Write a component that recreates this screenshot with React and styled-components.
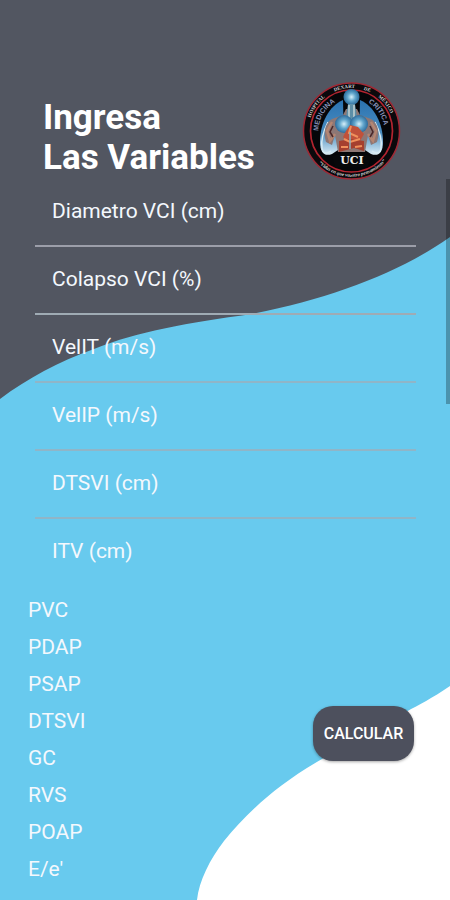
import React, { useId, useState } from "react";
import styled, { createGlobalStyle } from "styled-components";

const GlobalStyle = createGlobalStyle`
  body {
    margin: 0;
    font-family: Roboto, "Liberation Sans", sans-serif;
  }

  *, *::before, *::after {
    box-sizing: border-box;
  }
`;

const Screen = styled.main`
  position: relative;
  min-height: 100vh;
  padding: 82px 0 12px;
  background: #68caee;
  color: #f4f8fd;
  overflow: hidden;
  isolation: isolate;
`;

const Waves = styled.svg`
  position: absolute;
  inset: 0;
  z-index: -1;
  width: 100%;
  height: 100%;
`;

const ScrollThumb = styled.div`
  position: absolute;
  top: 179px;
  right: 0;
  width: 4px;
  height: 225px;
  background: rgba(0, 0, 0, 0.27);
`;

const Header = styled.header`
  display: flex;
  justify-content: space-between;
  align-items: flex-start;
  padding: 0 48px 0 43px;
`;

const Title = styled.h1`
  margin: 16px 0 0;
  font-size: 35px;
  font-weight: 700;
  line-height: 40px;
  color: #ffffff;
`;

const Logo = styled.svg`
  flex: none;
  width: 100px;
  height: 97px;
  overflow: visible;
`;

const Fields = styled.div`
  display: grid;
  padding: 0 34px 0 35px;
`;

const Input = styled.input`
  width: 100%;
  height: 68px;
  padding: 0 17px 2px;
  border: 0;
  border-bottom: 2px solid ${(p) => (p.$last ? "transparent" : p.$line)};
  border-radius: 0;
  background: transparent;
  color: inherit;
  font: inherit;
  font-size: 21px;
  outline: none;

  &::placeholder {
    color: inherit;
    opacity: 1;
  }
`;

const Bottom = styled.div`
  display: flex;
  justify-content: space-between;
  align-items: flex-start;
  padding: 5px 36px 0 28px;
`;

const Results = styled.ul`
  margin: 0;
  padding: 0;
  list-style: none;
  font-size: 21px;
  line-height: 37px;
`;

const Button = styled.button`
  margin-top: 114px;
  width: 101px;
  height: 55px;
  padding: 0;
  border: 0;
  border-radius: 20px;
  background: #4d505d;
  box-shadow: 0 1px 3px rgba(0, 0, 0, 0.35);
  color: #ffffff;
  font: inherit;
  font-size: 16px;
  font-weight: 500;
  cursor: pointer;
`;

const FIELDS = [
  { name: "vci", label: "Diametro VCI (cm)", line: "#9c9ea9" },
  { name: "colapso", label: "Colapso VCI (%)", line: "#9fabb4" },
  { name: "velIT", label: "VelIT (m/s)", line: "#90b5c7" },
  { name: "velIP", label: "VelIP (m/s)", line: "#90b5c7" },
  { name: "dtsvi", label: "DTSVI (cm)", line: "#90b5c7" },
  { name: "itv", label: "ITV (cm)", line: "#90b5c7" },
];

const RESULTS = ["PVC", "PDAP", "PSAP", "DTSVI", "GC", "RVS", "POAP", "E/e'"];

function Background() {
  return (
    <Waves viewBox="0 0 450 900" preserveAspectRatio="none" aria-hidden="true">
      <path
        d="M0 0H450V237C399 273 332 298 252 314C187 323 139 331 94 349C58 362 28 378 0 399Z"
        fill="#525661"
      />
      <path
        d="M450 686C431 699 420 704 406 712L322 759C275 786 247 813 224 841C210 859 199 881 197 900H450Z"
        fill="#ffffff"
      />
    </Waves>
  );
}

function UciLogo() {
  const id = useId();
  return (
    <Logo viewBox="0 2 100 97" role="img" aria-label="Medicina Critica UCI">
      <defs>
        <path id={`${id}top`} d="M6.500 51A43 43 0 0 1 92.500 51" />
        <path id={`${id}inner`} d="M16.500 51A33 33 0 0 1 82.500 51" />
        <path id={`${id}bottom`} d="M13 79A46 46 0 0 0 87 77" />
        <radialGradient id={`${id}glow`}>
          <stop offset="0" stopColor="#d6f0fa" />
          <stop offset="0.5" stopColor="#62a6cc" />
          <stop offset="1" stopColor="#2c6b9c" />
        </radialGradient>
        <linearGradient id={`${id}wing`} x1="0" y1="0" x2="0" y2="1">
          <stop offset="0" stopColor="#2a72b0" />
          <stop offset="0.6" stopColor="#4a8dc0" />
          <stop offset="1" stopColor="#dceef6" />
        </linearGradient>
      </defs>
      <circle cx="49.500" cy="51" r="48" fill="#0b090c" stroke="#a02834" strokeWidth="1.500" />
      <circle cx="49.500" cy="51" r="41" fill="#050609" stroke="#b3242f" strokeWidth="1.700" />

      {/* blue wings behind the body */}
      <path d="M41 20C27 26 18 43 18 62C18 72 22 77 30 74L42 66Z" fill={`url(#${id}wing)`} />
      <path d="M58 20C72 26 81 43 81 62C81 72 77 77 69 74L57 66Z" fill={`url(#${id}wing)`} />
      <path d="M26 42C21 52 19 62 20 68C21 74 25 74 29 71M73 42C78 52 80 62 79 68C78 74 74 74 70 71" fill="none" stroke="#d8ecf4" strokeWidth="1.500" />

      {/* torso and arms */}
      <path d="M44 29H55L58 35L69 39C76 43 78 52 75 62L69 65L66 55L63 72H36L33 55L30 65L24 62C21 52 23 43 30 39L41 35Z" fill="#8d7775" />
      <path d="M30 42L25 51L28 61L33 54M69 42L74 51L71 61L66 54" fill="none" stroke="#b58672" strokeWidth="2.500" />
      <path d="M31 46L28 52L31 57M68 46L71 52L68 57" fill="none" stroke="#4b2829" strokeWidth="1.500" />
      <ellipse cx="49.500" cy="17" rx="8" ry="8" fill={`url(#${id}glow)`} />
      <path d="M46 24H53L55 37L50 41L44 37Z" fill="#5d8fa7" />
      <path d="M47 25V38M52 25V38M38 38L49 41L61 38" stroke="#dde5df" strokeWidth="1.200" fill="none" />
      <circle cx="42" cy="44" r="9" fill={`url(#${id}glow)`} />
      <circle cx="57" cy="44" r="9" fill={`url(#${id}glow)`} />

      {/* heart and organs */}
      <path d="M48 45L56 47L62 54L58 61L46 62L41 57L44 51Z" fill="#c0513a" />
      <path d="M37 61L49 59L62 61V71L52 68L37 72Z" fill="#a5402f" />
      <path d="M49 46L47 53L56 57M42 59L48 62L58 59M39 67H46M53 67L60 66" stroke="#f0915c" strokeWidth="2" fill="none" />
      <path d="M48 52V69" stroke="#8eb2bc" strokeWidth="1.500" />
      <path d="M30 76Q49 69 69 76L66 87H33Z" fill="#07080a" />

      <text x="50" y="84" textAnchor="middle" fill="#eeeeee" fontFamily="DejaVu Serif, serif" fontSize="11" fontWeight="700">UCI</text>
      <text fill="#ced0d4" fontFamily="Liberation Serif, serif" fontSize="5" fontWeight="700">
        <textPath href={`#${id}top`} startOffset="10%">HOSPITAL</textPath>
        <textPath href={`#${id}top`} startOffset="37%">DEXART</textPath>
        <textPath href={`#${id}top`} startOffset="59%">DE</textPath>
        <textPath href={`#${id}top`} startOffset="71%">MÉXICO</textPath>
      </text>
      <text fill="#8994ba" fontFamily="Liberation Sans, sans-serif" fontSize="7" fontWeight="700">
        <textPath href={`#${id}inner`} startOffset="0%">MEDICINA</textPath>
        <textPath href={`#${id}inner`} startOffset="67%">CRÍTICA</textPath>
      </text>
      <text fill="#d6d6d6" fontFamily="Liberation Serif, serif" fontSize="5" fontStyle="italic" fontWeight="700" textAnchor="middle">
        <textPath href={`#${id}bottom`} startOffset="50%">“Vidas en que vuestro pensamiento”</textPath>
      </text>
    </Logo>
  );
}

function App() {
  const [values, setValues] = useState({});

  const handleChange = (e) => {
    setValues({ ...values, [e.target.name]: e.target.value });
  };

  return (
    <>
      <GlobalStyle />
      <Screen>
        <Background />
        <Header>
          <Title>
            Ingresa
            <br />
            Las Variables
          </Title>
          <UciLogo />
        </Header>

        <form onSubmit={(e) => e.preventDefault()}>
          <Fields>
            {FIELDS.map((field, i) => (
              <Input
                key={field.name}
                name={field.name}
                aria-label={field.label}
                placeholder={field.label}
                value={values[field.name] || ""}
                onChange={handleChange}
                inputMode="decimal"
                $line={field.line}
                $last={i === FIELDS.length - 1}
              />
            ))}
          </Fields>

          <Bottom>
            <Results>
              {RESULTS.map((name) => (
                <li key={name}>{name}</li>
              ))}
            </Results>
            <Button type="submit">CALCULAR</Button>
          </Bottom>
        </form>
        <ScrollThumb />
      </Screen>
    </>
  );
}

export default App;
